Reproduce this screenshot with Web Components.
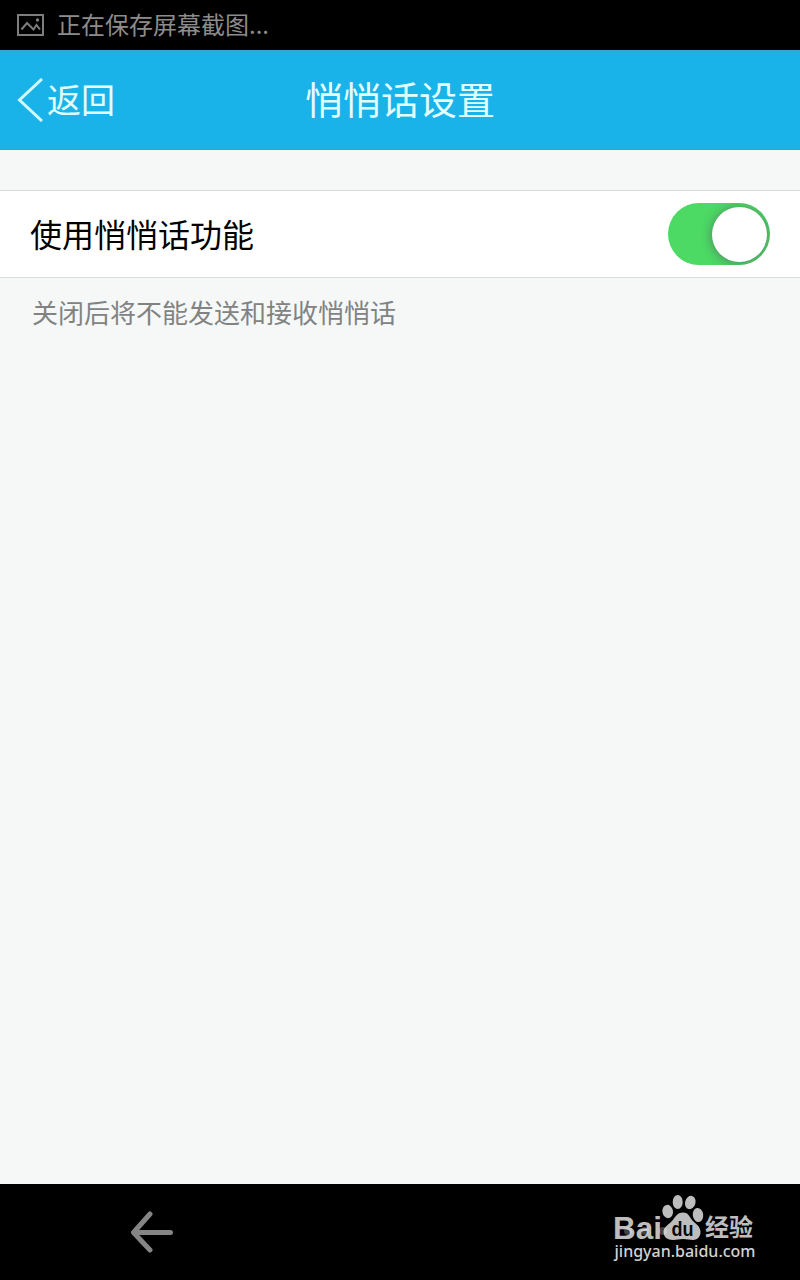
<!DOCTYPE html>
<html lang="zh-CN">
<head>
<meta charset="utf-8">
<title>悄悄话设置</title>
<style>
	html, body { margin: 0; height: 100%; }
	body {
		background: #f6f8f8;
		font-family: "Noto Sans CJK SC", sans-serif;
		overflow: hidden;
	}
</style>
</head>
<body>
<qq-screen>
	<status-bar slot="top">正在保存屏幕截图...</status-bar>
	<title-bar slot="top" back="返回">悄悄话设置</title-bar>
	<setting-row hint="关闭后将不能发送和接收悄悄话">
		使用悄悄话功能
		<toggle-switch slot="control" checked></toggle-switch>
	</setting-row>
	<nav-bar slot="bottom"><baidu-mark></baidu-mark></nav-bar>
</qq-screen>

<script>
class BaseElement extends HTMLElement {
	constructor() {
		super();
		this.attachShadow({ mode: 'open' });
	}

	connectedCallback() {
		this.shadowRoot.innerHTML = this.render();
	}
}

class QqScreen extends BaseElement {
	render() {
		return `
			<style>
				:host { display: flex; flex-direction: column; height: 1280px; }
				main { flex: 1; padding-top: 40px; }
			</style>
			<slot name="top"></slot>
			<main><slot></slot></main>
			<slot name="bottom"></slot>
		`;
	}
}
customElements.define('qq-screen', QqScreen);

class StatusBar extends BaseElement {
	render() {
		return `
			<style>
				:host {
					display: flex;
					align-items: center;
					gap: 13px;
					height: 50px;
					padding-left: 17px;
					box-sizing: border-box;
					background: #000;
					color: #8c8c8c;
					font-size: 24px;
					line-height: 46px;
				}
				span { padding-bottom: 3px; }
			</style>
			<svg width="27" height="22" viewBox="0 0 27 22" fill="none" stroke="#7d7d7d" stroke-width="2">
				<rect x="1" y="1" width="25" height="20"/>
				<path d="M4.500 15.500 10 9l6.500 6.500 3-4.500 3.500 4.500"/>
				<circle cx="20.500" cy="6" r="1.700" fill="#7d7d7d" stroke="none"/>
			</svg>
			<span><slot></slot></span>
		`;
	}
}
customElements.define('status-bar', StatusBar);

class TitleBar extends BaseElement {
	render() {
		return `
			<style>
				:host {
					display: grid;
					grid-template-columns: 1fr auto 1fr;
					align-items: center;
					height: 100px;
					background: #19b3ea;
					color: #e2ffff;
					box-shadow: inset 0 1px #35a5cd, inset 0 -1px #18aee3;
				}
				.back {
					display: flex;
					align-items: center;
					gap: 4px;
					padding-left: 17px;
					font-size: 34px;
				}
				.back span { line-height: 96px; padding-bottom: 2px; }
				h1 { margin: 0; padding-bottom: 4px; font-size: 38px; font-weight: 400; line-height: 96px; }
			</style>
			<div class="back">
				<svg width="26" height="44" viewBox="0 0 26 44" fill="none" stroke="#cffaff" stroke-width="3">
					<path d="M25 1 2.500 22 25 43"/>
				</svg>
				<span>${this.getAttribute('back')}</span>
			</div>
			<h1><slot></slot></h1>
		`;
	}
}
customElements.define('title-bar', TitleBar);

class SettingRow extends BaseElement {
	render() {
		return `
			<style>
				:host { display: block; }
				.row {
					display: flex;
					align-items: center;
					justify-content: space-between;
					height: 88px;
					padding: 0 30px;
					box-sizing: border-box;
					background: #fff;
					border: solid #d9dcdc;
					border-width: 1px 0;
					color: #000;
					font-size: 32px;
				}
				.row span { padding-bottom: 2px; }
				p { margin: 0; padding: 10px 32px; color: #818383; font-size: 26px; line-height: 48px; }
			</style>
			<div class="row"><span><slot></slot></span><slot name="control"></slot></div>
			<p>${this.getAttribute('hint')}</p>
		`;
	}
}
customElements.define('setting-row', SettingRow);

class ToggleSwitch extends BaseElement {
	connectedCallback() {
		super.connectedCallback();
		this.addEventListener('click', () => this.toggleAttribute('checked'));
	}

	render() {
		return `
			<style>
				:host {
					display: flex;
					align-items: center;
					width: 102px;
					height: 62px;
					padding: 3px;
					box-sizing: border-box;
					border-radius: 31px;
					background: #d5d8d8;
					overflow: hidden;
				}
				:host([checked]) { justify-content: flex-end; background: #4cd964; }
				i {
					width: 55px;
					height: 55px;
					border-radius: 50%;
					background: #fff;
					box-shadow: 0 1px 8px 2px rgba(80, 95, 95, .5);
				}
			</style>
			<i></i>
		`;
	}
}
customElements.define('toggle-switch', ToggleSwitch);

class NavBar extends BaseElement {
	render() {
		return `
			<style>
				:host {
					display: flex;
					align-items: center;
					justify-content: space-between;
					height: 96px;
					padding: 0 40px 0 130px;
					box-sizing: border-box;
					background: #000;
				}
			</style>
			<svg width="44" height="42" viewBox="0 0 44 42" fill="none" stroke="#858585" stroke-width="5" stroke-linecap="round" stroke-linejoin="round">
				<path d="M20 3 3.500 21.500 20 39M4 21.500H40.500"/>
			</svg>
			<slot></slot>
		`;
	}
}
customElements.define('nav-bar', NavBar);

class BaiduMark extends BaseElement {
	render() {
		return `
			<style>
				:host { display: block; height: 76px; }
				svg { display: block; }
				.latin { font-family: "Liberation Sans", sans-serif; font-weight: 700; }
				.url { font-family: "Noto Sans", sans-serif; font-weight: 500; }
			</style>
			<svg width="150" height="76" viewBox="0 0 150 76" fill="#bdbdbd">
				<text class="latin" x="3" y="44.500" font-size="32" textLength="49" lengthAdjust="spacingAndGlyphs">Bai</text>
				<!-- paw -->
				<ellipse cx="57.700" cy="17.500" rx="5.300" ry="6.700" transform="rotate(-10 57.700 17.500)"/>
				<ellipse cx="67.700" cy="8" rx="5" ry="7"/>
				<ellipse cx="80.300" cy="8.500" rx="5.200" ry="6.800" transform="rotate(15 80.300 8.500)"/>
				<ellipse cx="88" cy="21" rx="5.200" ry="7" transform="rotate(-8 88 21)"/>
				<path d="M73 18.500c-6 0-8 5-11 8.500-4 4-8.500 6-8.500 11 0 5 4 8 9.500 8 4 0 6-1 10-1s7 1 10 1c5 0 7.500-4 7.500-8 0-6-5-8-8.500-12-3-4-4-7.500-9-7.500z"/>
				<text class="latin" x="61.500" y="41.500" font-size="21" textLength="22" lengthAdjust="spacingAndGlyphs" fill="#080808">du</text>
				<g fill="#fff" opacity=".25">
					<circle cx="18" cy="37" r="4"/>
					<circle cx="35" cy="37" r="4"/>
					<circle cx="53" cy="37" r="4"/>
				</g>
				<text x="95" y="42" font-size="24" font-weight="700" textLength="48">经验</text>
				<text class="url" x="4.500" y="63" font-size="16.500" textLength="141" lengthAdjust="spacingAndGlyphs" fill="#d2d2d2">jingyan.baidu.com</text>
			</svg>
		`;
	}
}
customElements.define('baidu-mark', BaiduMark);
</script>
</body>
</html>
